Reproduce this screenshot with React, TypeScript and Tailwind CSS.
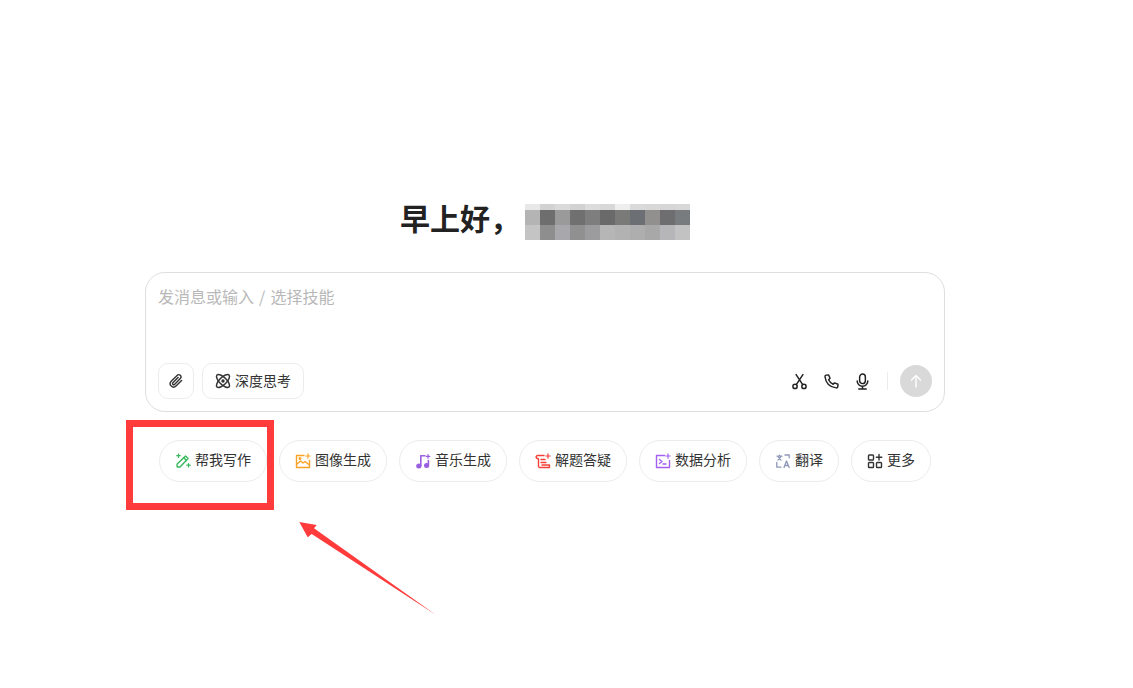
import type { ReactNode } from 'react'

const font = 'font-["Noto_Sans_CJK_SC","Liberation_Sans",sans-serif]'

// blurred name in the greeting, one row per mosaic band
const mosaic = [
  ['#e8e8e8', '#d2d2d2', '#dadada', '#d2d2d2', '#dcdcdc', '#d8d8d8', '#eeeeee', '#dadada', '#d8d8d8', '#d6d6d6', '#d8d8d8'],
  ['#b4b4b4', '#6e6e6e', '#9a9a9a', '#707070', '#7e7e7e', '#6a6a6a', '#7a7a78', '#6c7074', '#92908e', '#6e6e70', '#787c7e'],
  ['#c4c4c4', '#8e8e8e', '#a8a8ac', '#909090', '#9c9c9e', '#b6b6b6', '#b2b2b2', '#aeaeae', '#a8a8a8', '#b6b6b8', '#c2c2c2'],
]

function Icon({ children, color = '#333', size = 16 }: { children: ReactNode; color?: string; size?: number }) {
  return (
    <svg width={size} height={size} viewBox="0 0 16 16" fill="none" stroke={color} strokeWidth="1.4" strokeLinecap="round" strokeLinejoin="round" className="shrink-0">
      {children}
    </svg>
  )
}

const chips = [
  {
    label: '帮我写作',
    icon: (
      <Icon color="#36b85c">
        <path d="M2.200 14 2 11.200 10.500 3l2.600 2.600L5 14Z" />
        <path d="M8.800 4.800l2.600 2.600" />
        <path d="M3.500 1v3.400M1.800 2.700h3.400M13.500 10.500v3.400M11.800 12.200h3.400" strokeWidth="1.200" />
      </Icon>
    ),
  },
  {
    label: '图像生成',
    icon: (
      <Icon color="#f9a326">
        <path d="M9 2.500H1.500V14.500h13V7.500" />
        <path d="M1.500 11.500 5.500 8l2.500 2 2-1.500 4.500 3.500" />
        <circle cx="5" cy="5.500" r=".8" />
        <path d="M13 .8v4.400M10.800 3h4.400" strokeWidth="1.200" />
      </Icon>
    ),
  },
  {
    label: '音乐生成',
    icon: (
      <Icon color="#9a5fe0">
        <path d="M5.800 13V2.800h4" strokeWidth="1.600" />
        <ellipse cx="3.800" cy="13" rx="1.900" ry="1.800" fill="#9a5fe0" />
        <ellipse cx="11.600" cy="12.400" rx="1.900" ry="1.800" fill="#9a5fe0" />
        <path d="M13.400 12V7.500" strokeWidth="1.600" />
        <path d="M13 1.500v3.800M11.100 3.400h3.800" strokeWidth="1.200" />
      </Icon>
    ),
  },
  {
    label: '解题答疑',
    icon: (
      <Icon color="#f4413a">
        <path d="M9 2.500H2.500a1.500 1.500 0 0 0-1 2.500L3.500 6v6.500a1.500 1.500 0 0 0 1.500 2h9.500V12H7" />
        <path d="M6 6.500h4M6 9.500h5" />
        <path d="M13 .8v4.400M10.800 3h4.400" strokeWidth="1.200" />
      </Icon>
    ),
  },
  {
    label: '数据分析',
    icon: (
      <Icon color="#a35ff0">
        <path d="M9.500 2.500H1.500V14.500h13V7.500" />
        <path d="M4.500 6.500 7 8.500 4.500 10.500M8 11h3" />
        <path d="M13 .8v4.400M10.800 3h4.400" strokeWidth="1.200" />
      </Icon>
    ),
  },
  {
    label: '翻译',
    icon: (
      <Icon color="#8f97b8">
        <path d="M2 3.200h5M4.500 2v1.200M3 7.200l3-3.500M3.300 4.200 6 7.200" strokeWidth="1.200" />
        <path d="M10 2h4.200v2.800M1.800 9.500v4.700H6" strokeWidth="1.300" />
        <path d="m9 14.500 2.500-6.500 2.700 6.500M10 12.500h3.200" strokeWidth="1.300" />
      </Icon>
    ),
  },
  {
    label: '更多',
    icon: (
      <Icon color="#333">
        <rect x="1.500" y="2" width="5" height="5" rx=".8" />
        <rect x="1.500" y="9.500" width="5" height="5" rx=".8" />
        <rect x="9.500" y="9.500" width="5" height="5" rx=".8" />
        <path d="M12 1.500v5.500M9.300 4.200h5.500" />
      </Icon>
    ),
  },
]

export default function App() {
  return (
    <div className={`relative min-h-[688px] bg-white ${font}`}>
      <div className="ml-[145px] flex w-[800px] flex-col pt-[204px]">
        <div className="flex h-[36px] items-start justify-center">
          <h1 className="w-[125px] text-[30px] leading-[26px] font-bold text-[#222]">早上好，</h1>
          <div className="flex flex-col">
            {mosaic.map((row, r) => (
              <div key={r} className={r === 0 ? 'flex h-[6px]' : 'flex h-[15px]'}>
                {row.map((c, i) => (
                  <div key={i} className="w-[15px]" style={{ backgroundColor: c }} />
                ))}
              </div>
            ))}
          </div>
        </div>

        <div className="mt-[32px] flex h-[140px] flex-col justify-between rounded-[20px] border border-[#dedede] pt-[11px] pr-[12px] pb-[12px] pl-[12px]">
          <div className="text-[16px] leading-[24px] text-[#b8b8b8] [word-spacing:1.5px]">发消息或输入 / 选择技能</div>
          <div className="flex items-center justify-between">
            <div className="flex items-center gap-[8px]">
              <button className="flex h-[36px] w-[36px] items-center justify-center rounded-[10px] border border-[#ececec]">
                <Icon color="#333">
                  <path d="M13.600 7.400 8 13a3.300 3.300 0 0 1-4.800-4.700l5.900-5.900a2.200 2.200 0 0 1 3.200 3.100l-5.800 5.900a1.100 1.100 0 0 1-1.600-1.600l5.200-5.200" />
                </Icon>
              </button>
              <button className="flex h-[36px] w-[102px] items-center justify-center gap-[4px] rounded-[10px] border border-[#ececec] text-[14px] text-[#333]">
                <Icon color="#333">
                  <ellipse cx="8" cy="8" rx="8.500" ry="3.600" transform="rotate(45 8 8)" strokeWidth="1.500" />
                  <ellipse cx="8" cy="8" rx="8.500" ry="3.600" transform="rotate(-45 8 8)" strokeWidth="1.500" />
                  <circle cx="8" cy="8" r="1" fill="#333" />
                </Icon>
                <span className="pb-[2px]">深度思考</span>
              </button>
            </div>
            <div className="flex items-center">
              <div className="flex w-[32px] justify-center">
                <Icon color="#222" size={17}>
                  <circle cx="3.800" cy="12.600" r="2" />
                  <circle cx="12.200" cy="12.600" r="2" />
                  <path d="M5 11 11.200 1.500M11 11 4.800 1.500" />
                </Icon>
              </div>
              <div className="flex w-[32px] justify-center">
                <Icon color="#222" size={17}>
                  <path d="M3 2 5.300 1.800 6.600 5 5.300 6.300c.8 1.800 2.400 3.400 4.300 4.300l1.300-1.300 3.200 1.300-.2 2.300c-.1.8-.8 1.200-1.500 1.100C6.600 13.300 2.600 9.300 1.900 3.500 1.800 2.800 2.200 2.100 3 2Z" />
                </Icon>
              </div>
              <div className="flex w-[32px] justify-center pr-[1px]">
                <Icon color="#222" size={17}>
                  <rect x="5.300" y="1" width="5.400" height="9" rx="2.700" />
                  <path d="M3 7.500a5 5 0 0 0 10 0M8 12.500V15M4.500 15h7" />
                </Icon>
              </div>
              <div className="mr-[12px] ml-[8px] h-[18px] w-px bg-[#ececec]" />
              <button className="flex h-[32px] w-[32px] items-center justify-center rounded-full bg-[#d9d9d9]">
                <Icon color="#fff">
                  <path d="M8 14V2.500M3.500 7 8 2.500 12.500 7" />
                </Icon>
              </button>
            </div>
          </div>
        </div>

        <div className="mt-[28px] flex justify-center gap-[12px]">
          {chips.map((chip) => (
            <div key={chip.label} className="flex h-[42px] items-center gap-[4px] rounded-full border border-[#ececec] px-[15px] text-[14px] text-[#333]">
              {chip.icon}
              <span className="pb-[3px]">{chip.label}</span>
            </div>
          ))}
        </div>
      </div>

      {/* annotation drawn over the page */}
      <div className="absolute top-[420px] left-[126px] h-[90px] w-[148px] border-[7px] border-[#ff3b3b]" />
      <svg className="absolute top-0 left-0" width="1133" height="688" fill="none">
        <polygon points="299.300,522 316.700,525 314,528.300 436,615 311.700,534 307.700,537.300" fill="#ff3b3b" />
      </svg>
    </div>
  )
}
